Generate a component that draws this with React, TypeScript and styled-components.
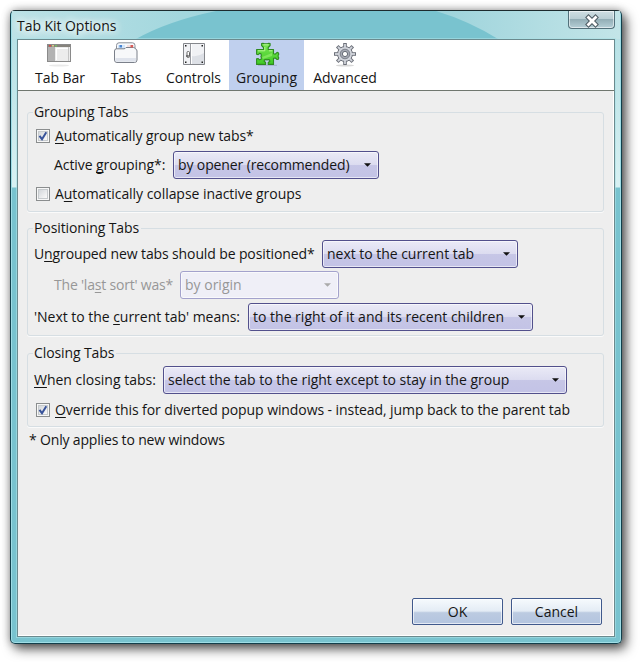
import React from 'react';
import styled, { createGlobalStyle, css } from 'styled-components';

const Global = createGlobalStyle`
  * { box-sizing: border-box; }
  html, body { margin: 0; background: #fff; }
  body { font: 14px/20px "Open Sans", "Noto Sans", sans-serif; color: #151515; overflow: hidden; }
  button, fieldset, legend { font: inherit; color: inherit; margin: 0; padding: 0; }
`;

const Desktop = styled.main`
  width: 640px;
  height: 662px;
  padding: 10px 18px 18px 10px;
  background: #fff;
`;

const Frame = styled.section`
  position: relative;
  width: 612px;
  height: 634px;
  padding: 0 6px 6px;
  border: 1px solid #123f4b;
  border-top-color: #1c2b2e;
  border-radius: 5px;
  background: linear-gradient(#b4dfe4 0, #c4e7ea 90px, #d8f1f3 176px, #78c3cf 177px, #78c3cf 100%);
  box-shadow: inset 0 0 0 1px #9fdde6, 0 0 9px rgba(0, 0, 0, .3), 4px 5px 12px rgba(0, 0, 0, .65);
`;

const TitleBar = styled.header`
  display: flex;
  justify-content: space-between;
  height: 28px;
`;

const Glass = styled.svg`
  position: absolute;
  left: 1px;
  top: 0;
`;

const Title = styled.h1`
  position: relative;
  margin: 4px 0 0;
  font-size: 14px;
  font-weight: 400;
  line-height: 21px;
  letter-spacing: -0.05px;
  text-shadow: 0 0 7px #fff, 0 0 9px #fff, 0 0 12px #fff;
`;

const Close = styled.button`
  position: relative;
  width: 47px;
  height: 18px;
  border: 1px solid #52707a;
  border-top: 0;
  border-radius: 0 0 4px 4px;
  background: linear-gradient(#cfdfe3 0, #b9ced4 45%, #93aeb6 50%, #b5cfd6 100%);
  box-shadow: inset 0 0 0 1px rgba(255, 255, 255, .55);
  svg { display: block; margin: 2px auto 0; }
`;

const Content = styled.div`
  position: relative;
  display: flex;
  flex-direction: column;
  width: 598px;
  height: 598px;
  border: 1px solid #6b8a8e;
  background: #eee;
  box-shadow: inset -1px -1px #fff, 0 0 0 1px rgba(170, 225, 230, .6);
`;

const Toolbar = styled.nav`
  display: flex;
  flex: none;
  height: 51px;
  padding-left: 8px;
  border-bottom: 1px solid #70776f;
  background: #fff;
`;

const Tab = styled.button<{ $w: number; $active?: boolean }>`
  display: flex;
  flex-direction: column;
  align-items: center;
  width: ${p => p.$w}px;
  border: 0;
  background: ${p => (p.$active ? '#c0d0ee' : 'transparent')};
  letter-spacing: -0.02px;
  white-space: nowrap;
  svg { display: block; flex: none; margin: 1px 0; }
`;

const Panel = styled.div`
  display: flex;
  flex: 1;
  flex-direction: column;
  padding: 12px 10px 11px 9px;
`;

const Group = styled.fieldset<{ $h: number; $mb: number }>`
  width: 577px;
  min-width: 0;
  height: ${p => p.$h}px;
  margin-bottom: ${p => p.$mb}px;
  padding: 0 0 0 6px;
  border: 1px solid #d6dee3;
  border-radius: 3px;
  box-shadow: 0 1px #fafafa;
`;

const Legend = styled.legend`
  height: 18px;
  margin-left: -1px;
  padding: 0 2px 0 1px;
  line-height: 17px;
  letter-spacing: -0.1px;
  white-space: nowrap;
`;

const Row = styled.div<{ $h: number; $indent?: number }>`
  display: flex;
  align-items: center;
  height: ${p => p.$h}px;
  padding-left: ${p => p.$indent ?? 0}px;
`;

const Label = styled.label<{ $w?: number; $ls?: number; $dim?: boolean }>`
  flex: none;
  width: ${p => (p.$w ? p.$w + 'px' : 'auto')};
  color: ${p => (p.$dim ? '#979797' : 'inherit')};
  letter-spacing: ${p => p.$ls ?? -0.08}px;
  white-space: nowrap;
  u { text-underline-offset: 2px; text-decoration-skip-ink: none; }
`;

const Box = styled.span`
  display: grid;
  place-items: center;
  flex: none;
  width: 14px;
  height: 14px;
  margin: 0 5px 0 2px;
  border: 1px solid #8a8d8e;
  background: linear-gradient(135deg, #c9ced3, #f6f6f6 75%);
  box-shadow: inset 0 0 0 1px #f7f7f7, inset 0 0 0 2px #c6cacd;
`;

const Select = styled.button<{ $w: number; $ls?: number; $dim?: boolean }>`
  display: flex;
  align-items: center;
  justify-content: space-between;
  flex: none;
  width: ${p => p.$w}px;
  height: 28px;
  padding: 0 7px 0 4px;
  border: 1px solid #52508c;
  border-radius: 3px;
  background: linear-gradient(#eaeaf6 0, #dcdcf0 48%, #c6c6e6 52%, #c3c3e6 100%);
  box-shadow: inset 0 0 0 1px rgba(255, 255, 255, .6);
  letter-spacing: ${p => p.$ls ?? 0}px;
  white-space: nowrap;
  ${p => p.$dim && css`
    color: #979797;
    border-color: #a3a2cc;
    background: #efeff7;
  `}
`;

const Note = styled.p`
  margin: 0 0 0 2px;
  letter-spacing: -0.17px;
`;

const Actions = styled.footer`
  display: flex;
  gap: 8px;
  justify-content: flex-end;
  margin-top: auto;
  padding-right: 2px;
`;

const Push = styled.button`
  width: 91px;
  height: 27px;
  border: 1px solid #40598c;
  border-radius: 2px;
  background: linear-gradient(#f6fafd 0, #e4ecf5 48%, #bccbe1 55%, #b3c4df 100%);
  box-shadow: inset 0 0 0 1px rgba(255, 255, 255, .65);
`;

const Check = () => (
  <svg width="10" height="10" viewBox="0 0 10 10"><path d="M1.5 4.8 4 8.2 8.3 1.2" fill="none" stroke="#38539a" strokeWidth="2" /></svg>
);
const Arrow = ({ c = '#111' }: { c?: string }) => (
  <svg width="7" height="4" viewBox="0 0 8 4"><path d="M0 0h8L4 4z" fill={c} /></svg>
);

const TabBarIcon = () => (
  <svg width="26" height="26" viewBox="0 0 26 26">
    <ellipse cx="12" cy="24.500" rx="10" ry="1" fill="#e9e9e9" />
    <rect x=".5" y="3.500" width="23" height="17" fill="#ececec" stroke="#8a8a8a" />
    <path d="M1 4h22v2H1z" fill="#86837c" />
    <path d="M1 6h7v14H1z" fill="#b2b2b2" /><path d="M9 7h12v1H9zM9 8h1v11H9z" fill="#fff" />
    <path d="M2 4h2v1.500H2z" fill="#d44" /><path d="M5 4h2v1.500H5z" fill="#dc8" /><path d="M8 4h2v1.500H8z" fill="#7b6" />
    <path d="M21.500 6v14" stroke="#c5c5c5" />
  </svg>
);
const TabsIcon = () => (
  <svg width="26" height="26" viewBox="0 0 26 26">
    <path d="M3.500 9V4.500Q3.500 1.800 6 1.800h13.500q2.500 0 2.500 2.700V9" fill="#f6f9fd" stroke="#8a8f98" />
    <path d="M5 4h7v4H5z" fill="#d3e5f9" /><path d="M14 4h7v4h-7z" fill="#f7dedd" />
    <path d="M1.500 10Q1.500 7.800 3.500 7.800h7.500q1.200 0 2-1.300h7.500Q22 6.500 22.300 7.800q1.700.3 1.700 2.200v9q0 2.500-2.500 2.500H4q-2.500 0-2.500-2.500z" fill="#f7f8fa" stroke="#7b808a" />
    <path d="M6.500 4H9v2.500H6.500z" fill="#4784d2" /><path d="M17.500 4H20v2.500h-2.500z" fill="#d85c58" />
    <path d="M2.500 17h20.500v2.500q0 1.200-1 1.200H4q-1.500 0-1.500-1.200z" fill="#dfe3ec" />
  </svg>
);
const ControlsIcon = () => (
  <svg width="26" height="26" viewBox="0 0 26 26">
    <path d="M2.500 2.500h21v21h-21z" fill="#f1f2f5" stroke="#85878c" />
    <path d="M9.500 3v20" stroke="#999ba1" /><path d="M10.500 3v20" stroke="#fff" />
    <path d="M11 15Q17 16 23 12v11H11z" fill="#dde0e6" />
    <rect x="6" y="10.500" width="2.500" height="6" rx="1" fill="#fff" stroke="#666" /><path d="M5 15h3" stroke="#333" />
    <path d="M4 4h1.500v1.500H4zM20.500 4H22v1.500h-1.500zM4 20.500h1.500V22H4zM20.500 20.500H22V22h-1.500z" fill="#222" />
  </svg>
);
const GroupingIcon = () => (
  <svg width="26" height="26" viewBox="0 0 26 26">
    <defs><linearGradient id="leaf" x2="0" y2="1"><stop stopColor="#7be555" /><stop offset="1" stopColor="#3ecb24" /></linearGradient></defs>
    <path d="M4 24.300h19" stroke="#8d9aba" opacity=".6" />
    <path d="M2.600 8.500H9.500V6.500L7.600 4.500V2.600L9 2.200l1.300.6h3.300l1.200-.6 1.300.4v1.900L14.200 6.500v2h5.300v4.300l1.800.3 1.800-1.700 1.200.3.500 1.500-.6.800v2l.6.800-.5 1.500-1.200.2-1.800-1.500-1.800.3v6.100h-5.300v-1.900l1.700-1.200-.4-1.400-1.500-.3-1 .5-1-.5-1.500.3-.4 1.400 1.500 1.200v1.900H2.600v-5.600l1.600-.3 1.200 1.300 1.700-.5.300-1.600-.5-1.200.5-1.200-.4-1.500-1.500-.4-1.300 1.200-1.600-.4z" fill="url(#leaf)" stroke="#2f8a20" strokeWidth="1.100" strokeLinejoin="round" />
    <path d="M4 9.800h6.800V6M9.500 3.800h5M15 9.800h3.300" stroke="#b4f58f" fill="none" />
    <path d="m8 16 10-4v3l-9 3z" fill="#a0f079" opacity=".55" />
  </svg>
);
const AdvancedIcon = () => (
  <svg width="26" height="26" viewBox="0 0 26 26">
    <ellipse cx="13" cy="24.500" rx="9" ry="1" fill="#d8d8d8" />
    <g stroke="#6d717a" strokeWidth="3.600">
      {[0, 45, 90, 135].map(a => <path key={a} d="M13 2v22" transform={`rotate(${a} 13 13)`} />)}
    </g>
    <circle cx="13" cy="13" r="7.500" fill="#d2d5dc" stroke="#6d717a" />
    <g stroke="#d2d5dc" strokeWidth="1.800">
      {[0, 45, 90, 135].map(a => <path key={a} d="M13 3v20" transform={`rotate(${a} 13 13)`} />)}
    </g>
    <circle cx="13" cy="13" r="4.800" fill="#a5a9b3" stroke="#7c808a" />
    <circle cx="13" cy="13" r="2.600" fill="#fff" stroke="#666b75" />
  </svg>
);

export default function App() {
  return (
    <Desktop>
      <Global />
      <Frame>
        <Glass width="608" height="28" viewBox="0 0 608 28">
          <defs>
            <linearGradient id="haze"><stop stopColor="#bce2e6" /><stop offset=".28" stopColor="#a3d7de" /><stop offset=".7" stopColor="#9dd3db" /><stop offset="1" stopColor="#c3e5e8" /></linearGradient>
          </defs>
          <path d="M0 0h608v28H0z" fill="url(#haze)" />
          <path d="M124 28Q156 10 204 0H424Q457 10 486 28z" fill="#79c3cf" />
        </Glass>
        <TitleBar>
          <Title>Tab Kit Options</Title>
          <Close aria-label="Close">
            <svg width="16" height="14" viewBox="0 0 16 14"><path d="m4.500 3.500 7 7m0-7-7 7" stroke="#4d5b62" strokeWidth="4.800" strokeLinecap="square" /><path d="m4.500 3.500 7 7m0-7-7 7" stroke="#fff" strokeWidth="2.800" strokeLinecap="square" /></svg>
          </Close>
        </TitleBar>
        <Content>
          <Toolbar>
            <Tab $w={68}><TabBarIcon />Tab Bar</Tab>
            <Tab $w={64}><TabsIcon />Tabs</Tab>
            <Tab $w={71}><ControlsIcon />Controls</Tab>
            <Tab $w={75} $active><GroupingIcon />Grouping</Tab>
            <Tab $w={82}><AdvancedIcon />Advanced</Tab>
          </Toolbar>
          <Panel>
            <Group $h={109} $mb={7}>
              <Legend>Grouping Tabs</Legend>
              <Row $h={30}><Box><Check /></Box><Label $ls={-0.1}><u>A</u>utomatically group new tabs*</Label></Row>
              <Row $h={28} $indent={20}><Label $w={119}>Active <u>g</u>rouping*:</Label><Select $w={206} $ls={-0.12}>by opener (recommended)<Arrow /></Select></Row>
              <Row $h={30}><Box /><Label $ls={-0.05}>A<u>u</u>tomatically collapse inactive groups</Label></Row>
            </Group>
            <Group $h={117} $mb={8}>
              <Legend>Positioning Tabs</Legend>
              <Row $h={34}><Label $w={288} $ls={-0.12}>U<u>n</u>grouped new tabs should be positioned*</Label><Select $w={196} $ls={-0.03}>next to the current tab<Arrow /></Select></Row>
              <Row $h={28} $indent={20}><Label $w={126} $ls={-0.2} $dim>The 'la<u>s</u>t sort' was*</Label><Select $w={159} $dim>by origin<Arrow c="#aaa" /></Select></Row>
              <Row $h={35}><Label $w={214} $ls={-0.03}>'Next to the <u>c</u>urrent tab' means:</Label><Select $w={285}>to the right of it and its recent children<Arrow /></Select></Row>
            </Group>
            <Group $h={83} $mb={3}>
              <Legend>Closing Tabs</Legend>
              <Row $h={36}><Label $w={129} $ls={-0.01}><u>W</u>hen closing tabs:</Label><Select $w={404}>select the tab to the right except to stay in the group<Arrow /></Select></Row>
              <Row $h={23}><Box><Check /></Box><Label><u>O</u>verride this for diverted popup windows - instead, jump back to the parent tab</Label></Row>
            </Group>
            <Note>* Only applies to new windows</Note>
            <Actions><Push>OK</Push><Push>Cancel</Push></Actions>
          </Panel>
        </Content>
      </Frame>
    </Desktop>
  );
}
